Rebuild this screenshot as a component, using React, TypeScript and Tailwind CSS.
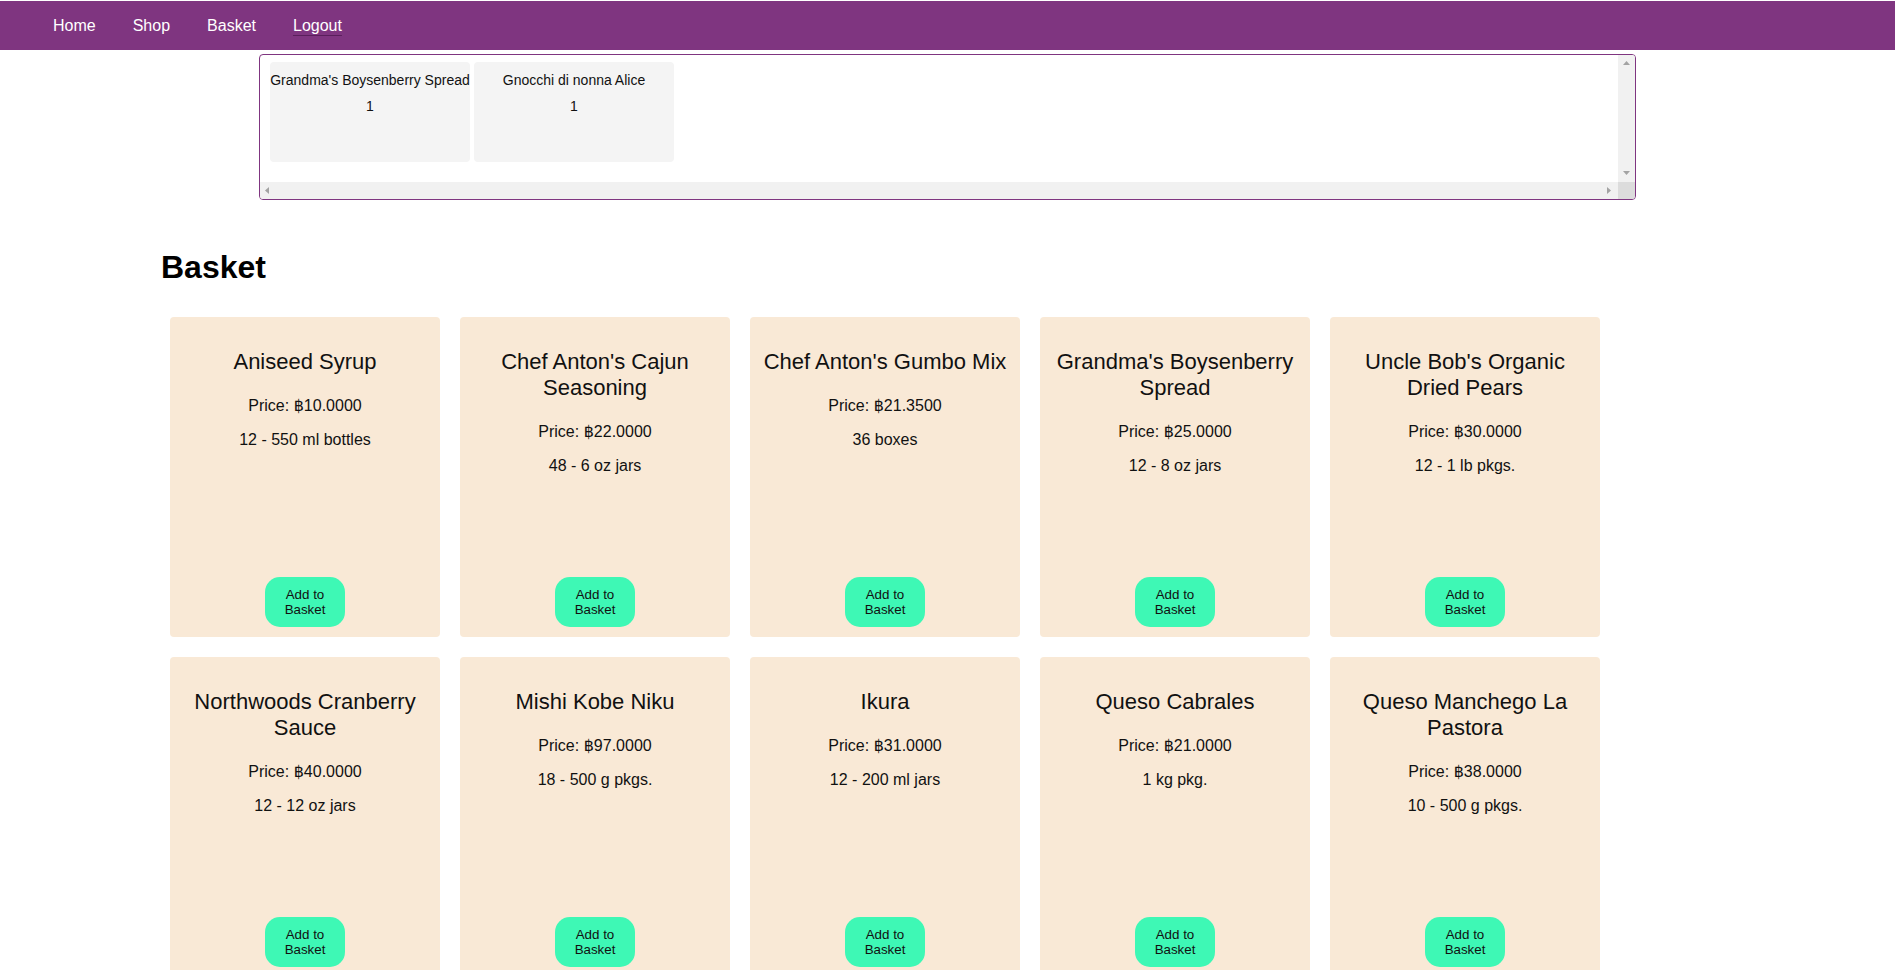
import React from "react";

type Product = { name: string; price: string; qty: string };

const products: Product[] = [
  { name: "Aniseed Syrup", price: "10.0000", qty: "12 - 550 ml bottles" },
  { name: "Chef Anton's Cajun Seasoning", price: "22.0000", qty: "48 - 6 oz jars" },
  { name: "Chef Anton's Gumbo Mix", price: "21.3500", qty: "36 boxes" },
  { name: "Grandma's Boysenberry Spread", price: "25.0000", qty: "12 - 8 oz jars" },
  { name: "Uncle Bob's Organic Dried Pears", price: "30.0000", qty: "12 - 1 lb pkgs." },
  { name: "Northwoods Cranberry Sauce", price: "40.0000", qty: "12 - 12 oz jars" },
  { name: "Mishi Kobe Niku", price: "97.0000", qty: "18 - 500 g pkgs." },
  { name: "Ikura", price: "31.0000", qty: "12 - 200 ml jars" },
  { name: "Queso Cabrales", price: "21.0000", qty: "1 kg pkg." },
  { name: "Queso Manchego La Pastora", price: "38.0000", qty: "10 - 500 g pkgs." },
];

const basket = [
  { name: "Grandma's Boysenberry Spread", count: 1 },
  { name: "Gnocchi di nonna Alice", count: 1 },
];

function Arrow({ dir }: { dir: "up" | "down" | "left" | "right" }) {
  const pts: Record<string, string> = {
    up: "0,4 3.5,0 7,4",
    down: "0,0 7,0 3.5,4",
    left: "4,0 4,7 0,3.5",
    right: "0,0 0,7 4,3.5",
  };
  const vertical = dir === "up" || dir === "down";
  return (
    <svg width={vertical ? 7 : 4} height={vertical ? 4 : 7} viewBox={vertical ? "0 0 7 4" : "0 0 4 7"}>
      <polygon points={pts[dir]} fill="#a3a3a3" />
    </svg>
  );
}

function Card({ p }: { p: Product }) {
  return (
    <div className="flex h-[320px] w-[270px] flex-col items-center rounded-[4px] bg-[#f9e9d6] px-[10px] pt-[32px] pb-[10px] text-center text-[#111]">
      <div className="text-[22px] leading-[26px]">{p.name}</div>
      <div className="mt-[22.5px] text-[16px] leading-[18.4px]">Price: ฿{p.price}</div>
      <div className="mt-[15px] text-[16px] leading-[18.4px]">{p.qty}</div>
      <button className="mt-auto flex h-[50px] w-[80px] flex-col items-center justify-center rounded-[15px] bg-[#3ef8b5] text-[13.33px] leading-[15.3px] text-[#111]">
        <span>Add to</span>
        <span>Basket</span>
      </button>
    </div>
  );
}

export default function App() {
  return (
    <div
      className="h-[970px] overflow-hidden bg-white"
      style={{ fontFamily: '"Liberation Sans", Arial, "DejaVu Sans", sans-serif' }}
    >
      <nav className="mt-[1px] flex h-[49px] items-center bg-[#7f3580] pl-[34.5px] text-[16px] text-white">
        <a className="px-[18.5px]">Home</a>
        <a className="px-[18.5px]">Shop</a>
        <a className="px-[18.5px]">Basket</a>
        <a className="px-[18.5px] underline decoration-[#5a1f5c] underline-offset-[4px]">Logout</a>
      </nav>

      <div className="mx-auto mt-[4px] flex h-[146px] w-[1377px] flex-col overflow-hidden rounded-[4px] border border-[#7f3580]">
        <div className="flex flex-1">
          <div className="flex flex-1 gap-[4px] pl-[10px] pt-[7px]">
            {basket.map((b) => (
              <div
                key={b.name}
                className="flex h-[100px] w-[200px] flex-col items-center rounded-[4px] bg-[#f4f4f4] pt-[10px] text-[14px] leading-[16px] text-[#111] whitespace-nowrap"
              >
                <div>{b.name}</div>
                <div className="mt-[10px]">{b.count}</div>
              </div>
            ))}
          </div>
          <div className="flex w-[17px] flex-col items-center justify-between bg-[#f1f1f1] pt-[6px] pb-[7px]">
            <Arrow dir="up" />
            <Arrow dir="down" />
          </div>
        </div>
        <div className="flex h-[17px]">
          <div className="flex flex-1 items-center justify-between bg-[#f1f1f1] pl-[5px] pr-[7px]">
            <Arrow dir="left" />
            <Arrow dir="right" />
          </div>
          <div className="w-[17px] bg-[#dcdcdc]" />
        </div>
      </div>

      <div className="pl-[161px]">
        <h1 className="mt-[49px] text-[32px] font-bold leading-[36.8px] text-black">Basket</h1>
        <div className="mt-[31px] grid grid-cols-[repeat(5,270px)] gap-[20px] pl-[9px]">
          {products.map((p) => (
            <Card key={p.name} p={p} />
          ))}
        </div>
      </div>
    </div>
  );
}
